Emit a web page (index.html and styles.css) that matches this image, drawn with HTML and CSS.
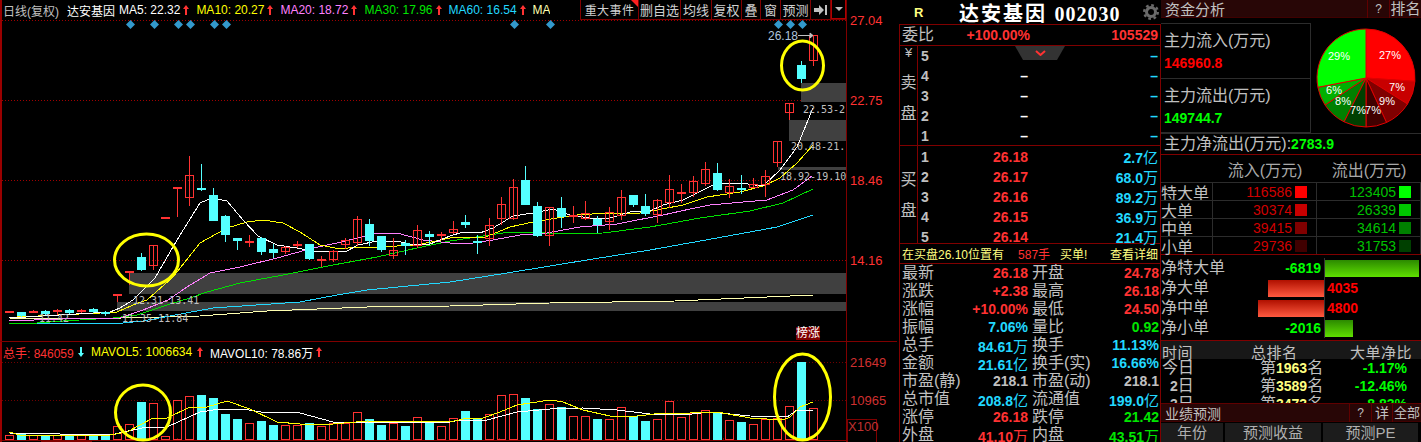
FILE: index.html
```html
<!DOCTYPE html>
<html lang="zh-CN">

<head>
    <meta charset="UTF-8">
    <title>达安基因 002030</title>
    <link rel="stylesheet" href="styles.css">
</head>

<body>
    <div class="app">
        <!-- K线 + 成交量 -->
        <div class="left">
            <div class="pane kline">
                <div class="plot">
                    <div class="head">
                        <div class="legend">
                            <span class="gray name">日线(复权)</span>
                            <span class="white stock">达安基因</span>
                            <span class="white">MA5: 22.32</span><svg class="up"><path d="M3 0 6 4H4v6H2V4H0z" /></svg>
                            <span class="yellow">MA10: 20.27</span><svg class="up"><path d="M3 0 6 4H4v6H2V4H0z" /></svg>
                            <span class="pink">MA20: 18.72</span><svg class="up"><path d="M3 0 6 4H4v6H2V4H0z" /></svg>
                            <span class="green">MA30: 17.96</span><svg class="up"><path d="M3 0 6 4H4v6H2V4H0z" /></svg>
                            <span class="blue">MA60: 16.54</span><svg class="up"><path d="M3 0 6 4H4v6H2V4H0z" /></svg>
                            <span class="pale">MA:</span>
                        </div>
                        <div class="tools">
                            <div class="tool event">重大事件</div>
                            <div class="tool w42">删自选</div>
                            <div class="tool w31">均线</div>
                            <div class="tool w30">复权</div>
                            <div class="tool w19">叠</div>
                            <div class="tool w20">窗</div>
                            <div class="tool w30">预测</div>
                            <div class="tool w20">
                                <svg width="13" height="10"><path d="M0 3H5V0L10 5 5 10V7H0z M11 0h2v10h-2z" fill="#c0c0c0" /></svg>
                            </div>
                            <div class="tool drop"><svg width="8" height="4"><path d="M0 0H8L4 4z" fill="#c0c0c0" /></svg></div>
                        </div>
                    </div>
                    <svg id="klineChart" class="chart" width="846" height="321" viewBox="0 20 846 321"></svg>
                    <div class="tag">榜涨</div>
                </div>
                <div class="axis price-axis">
                    <p>27.04</p>
                    <p>22.75</p>
                    <p>18.46</p>
                    <p>14.16</p>
                </div>
            </div>
            <div class="pane vol">
                <div class="plot">
                    <div class="head vol-head">
                        <span class="red">总手: 846059</span><svg class="up down"><path d="M3 10 6 6H4V0H2V6H0z" /></svg>
                        <span class="yellow">MAVOL5: 1006634</span><svg class="up"><path d="M3 0 6 4H4v6H2V4H0z" /></svg>
                        <span class="white">MAVOL10: 78.86万</span><svg class="up"><path d="M3 0 6 4H4v6H2V4H0z" /></svg>
                    </div>
                    <svg id="volChart" class="chart" width="846" height="80" viewBox="0 362 846 80"></svg>
                </div>
                <div class="axis vol-axis">
                    <p>21649</p>
                    <p>10965</p>
                    <p class="x100">X100</p>
                </div>
            </div>
        </div>

        <!-- 盘口 -->
        <div class="quote">
            <div class="title">
                <span class="r">R</span>
                <span class="stock-name">达安基因 <em>002030</em></span>
                <svg class="gear" width="16" height="16">
                    <circle cx="8" cy="8" r="4.5" fill="none" stroke="#6a6a6a" stroke-width="3" />
                    <circle cx="8" cy="8" r="6.8" fill="none" stroke="#6a6a6a" stroke-width="2.4" stroke-dasharray="2.7 2.64" />
                </svg>
            </div>
            <div class="box">
                <div class="ratio">
                    <span class="lab">委比</span>
                    <b class="red">+100.00%</b>
                    <b class="red right">105529</b>
                </div>
                <div class="book sell">
                    <div class="side"><small>¥</small><span>卖</span><span>盘</span></div>
                    <div class="rows">
                        <div class="row"><b>5</b><i></i><i class="blue">–</i></div>
                        <div class="row"><b>4</b><i class="white">–</i><i class="blue">–</i></div>
                        <div class="row"><b>3</b><i class="white">–</i><i class="blue">–</i></div>
                        <div class="row"><b>2</b><i class="white">–</i><i class="blue">–</i></div>
                        <div class="row"><b>1</b><i class="white">–</i><i class="blue">–</i></div>
                    </div>
                    <div class="fold"><svg width="11" height="6"><path d="M1 1 5.5 5 10 1" fill="none" stroke="#ff3232" stroke-width="2" /></svg></div>
                </div>
                <div class="book buy">
                    <div class="side"><span>买</span><span>盘</span></div>
                    <div class="rows">
                        <div class="row"><b>1</b><b class="red">26.18</b><b class="blue">2.7<u>亿</u></b></div>
                        <div class="row"><b>2</b><b class="red">26.17</b><b class="blue">68.0<u>万</u></b></div>
                        <div class="row"><b>3</b><b class="red">26.16</b><b class="blue">89.2<u>万</u></b></div>
                        <div class="row"><b>4</b><b class="red">26.15</b><b class="blue">36.9<u>万</u></b></div>
                        <div class="row"><b>5</b><b class="red">26.14</b><b class="blue">21.4<u>万</u></b></div>
                    </div>
                </div>
                <div class="notice">
                    <span>在买盘26.10位置有</span>
                    <span class="red hand">587手</span>
                    <span class="bill">买单!</span>
                    <span class="more">查看详细</span>
                </div>
                <div class="stats">
                    <span>最新</span><b class="red">26.18</b><span>开盘</span><b class="red">24.78</b>
                    <span>涨跌</span><b class="red">+2.38</b><span>最高</span><b class="red">26.18</b>
                    <span>涨幅</span><b class="red">+10.00%</b><span>最低</span><b class="red">24.50</b>
                    <span>振幅</span><b class="blue">7.06%</b><span>量比</span><b class="green">0.92</b>
                    <span>总手</span><b class="blue">84.61<u>万</u></b><span>换手</span><b class="blue">11.13%</b>
                    <span>金额</span><b class="blue">21.61<u>亿</u></b><span>换手(实)</span><b class="blue">16.66%</b>
                    <span>市盈(静)</span><b>218.1</b><span>市盈(动)</span><b>218.1</b>
                    <span>总市值</span><b class="blue">208.8<u>亿</u></b><span>流通值</span><b class="blue">199.0<u>亿</u></b>
                    <span>涨停</span><b class="red">26.18</b><span>跌停</span><b class="green">21.42</b>
                    <span>外盘</span><b class="red">41.10<u>万</u></b><span>内盘</span><b class="green">43.51<u>万</u></b>
                </div>
            </div>
        </div>

        <!-- 资金分析 -->
        <div class="funds">
            <div class="bar">
                <span class="bar-title">资金分析</span>
                <span class="bar-btn q">?</span>
                <span class="bar-btn rank">排名</span>
            </div>
            <div class="flow">
                <div class="flow-boxes">
                    <div class="flow-box">
                        <span class="lab">主力流入(万元)</span>
                        <b class="bright-red">146960.8</b>
                    </div>
                    <div class="flow-box">
                        <span class="lab">主力流出(万元)</span>
                        <b class="bright-green">149744.7</b>
                    </div>
                </div>
                <svg class="pie" width="110" height="110" viewBox="0 0 110 110">
                    <path d="M55 55V6A49 49 0 0 1 103.9 58.3z" fill="#ff0000" />
                    <path d="M55 55 103.9 58.3A49 49 0 0 1 96.5 81z" fill="#c80000" />
                    <path d="M55 55 96.5 81A49 49 0 0 1 75.5 99.5z" fill="#800000" />
                    <path d="M55 55 75.5 99.5A49 49 0 0 1 55 104z" fill="#400000" />
                    <path d="M55 55V104A49 49 0 0 1 33 98.8z" fill="#004000" />
                    <path d="M55 55 33 98.8A49 49 0 0 1 14 82z" fill="#008000" />
                    <path d="M55 55 14 82A49 49 0 0 1 6.9 64.3z" fill="#00b000" />
                    <path d="M55 55 6.9 64.3A49 49 0 0 1 55 6z" fill="#00ff00" />
                    <text x="79" y="36">27%</text>
                    <text x="86" y="68">7%</text>
                    <text x="76" y="82">9%</text>
                    <text x="62" y="91">7%</text>
                    <text x="47" y="91">7%</text>
                    <text x="32" y="82">8%</text>
                    <text x="23" y="71">6%</text>
                    <text x="28" y="37">29%</text>
                </svg>
            </div>
            <div class="net-line"><span class="lab">主力净流出(万元):</span><b class="bright-green">2783.9</b></div>
            <div class="table">
                <div class="cell head-cell"></div>
                <div class="cell head-cell">流入(万元)</div>
                <div class="cell head-cell">流出(万元)</div>
                <div class="cell lab-cell">特大单</div>
                <div class="cell num t-red">116586<i class="sw s1"></i></div>
                <div class="cell num t-green">123405<i class="sw g1"></i></div>
                <div class="cell lab-cell">大单</div>
                <div class="cell num t-red">30374<i class="sw s2"></i></div>
                <div class="cell num t-green">26339<i class="sw g2"></i></div>
                <div class="cell lab-cell">中单</div>
                <div class="cell num t-red">39415<i class="sw s3"></i></div>
                <div class="cell num t-green">34614<i class="sw g3"></i></div>
                <div class="cell lab-cell">小单</div>
                <div class="cell num t-red">29736<i class="sw s4"></i></div>
                <div class="cell num t-green">31753<i class="sw g4"></i></div>
            </div>
            <div class="net">
                <div class="net-row">
                    <div class="net-left"><span class="lab">净特大单</span><b class="bright-green auto">-6819</b></div>
                    <div class="net-right"><i class="fill f-green" style="width:94px"></i></div>
                </div>
                <div class="net-row">
                    <div class="net-left"><span class="lab">净大单</span><i class="fill f-red auto" style="width:56px"></i></div>
                    <div class="net-right"><b class="bright-red">4035</b></div>
                </div>
                <div class="net-row">
                    <div class="net-left"><span class="lab">净中单</span><i class="fill f-red auto" style="width:66px"></i></div>
                    <div class="net-right"><b class="bright-red">4800</b></div>
                </div>
                <div class="net-row">
                    <div class="net-left"><span class="lab">净小单</span><b class="bright-green auto">-2016</b></div>
                    <div class="net-right"><i class="fill f-green" style="width:28px"></i></div>
                </div>
            </div>
            <div class="ranks">
                <div class="rank-head"><span>时间</span><span>总排名</span><span>大单净比</span></div>
                <div class="rank-row"><span class="when">今日</span><span class="pos">第<b>1963</b>名</span><b class="bright-green pct">-1.17%</b></div>
                <div class="rank-row"><span class="when"><b>2</b>日</span><span class="pos">第<b>3589</b>名</span><b class="bright-green pct">-12.46%</b></div>
                <div class="rank-row"><span class="when"><b>3</b>日</span><span class="pos">第<b>3473</b>名</span><b class="bright-green pct">-8.83%</b></div>
            </div>
            <div class="bar forecast">
                <span class="bar-title">业绩预测</span>
                <span class="bar-btn q">?</span>
                <span class="bar-btn more-btn">详</span>
                <span class="bar-btn all">全部</span>
            </div>
            <div class="forecast-head">
                <span class="c1">年份</span>
                <span class="c2">预测收益</span>
                <span class="c3">预测PE</span>
            </div>
        </div>
    </div>
    <script src="chart.js"></script>
</body>

</html>
```

FILE: styles.css
```css
html,
body {
    margin: 0;
    height: 100%;
    overflow: hidden;
    background-color: #000;
}

body {
    font-family: "Liberation Sans", "Noto Sans CJK SC", sans-serif;
    font-size: 12px;
    color: #c0c0c0;
}

p {
    margin: 0;
}

i,
em,
u {
    font-style: normal;
    text-decoration: none;
}

.app {
    display: grid;
    grid-template-columns: 897px 264px 260px;
    height: 442px;
    overflow: hidden;
}

.white { color: #fff; }
.gray { color: #c0c0c0; }
.yellow { color: #ffff00; }
.pink { color: #ff80ff; }
.green { color: #00e600; }
.blue { color: #22d8ff; }
.pale { color: #ffffb0; }
.red { color: #ff3232; }
.bright-red { color: #ff0000; }
.bright-green { color: #00ff00; }

/* left chart */
.left {
    box-shadow: inset 2px 0 #9a0000;
}

.pane {
    display: flex;
}

.kline {
    height: 341px;
    border-bottom: 1px solid #800000;
}

.vol {
    height: 100px;
}

.plot {
    width: 846px;
    position: relative;
}

.chart {
    display: block;
    overflow: visible;
}

.head {
    height: 20px;
    display: flex;
    align-items: center;
    white-space: nowrap;
}

.legend {
    width: 550px;
    height: 20px;
    padding-left: 3px;
    box-sizing: border-box;
    display: flex;
    align-items: center;
    overflow: hidden;
    flex-shrink: 0;
}

.legend .name {
    width: 64px;
    flex-shrink: 0;
}

.legend .stock {
    width: 52px;
    flex-shrink: 0;
}

.up {
    width: 6px;
    height: 10px;
    margin: 0 7px 0 3px;
    fill: #ff3232;
    flex-shrink: 0;
}

.down {
    fill: #54ffff;
}

.tools {
    margin-left: auto;
    display: flex;
    height: 20px;
    box-sizing: border-box;
    border: 1px solid #800000;
    border-top: 0;
    border-right: 0;
    color: #d0d0d0;
}

.tool {
    display: flex;
    align-items: center;
    justify-content: center;
    border-right: 1px solid #800000;
    box-sizing: border-box;
    font-size: 13px;
}

.event {
    width: 58px;
    font-size: 12px;
    letter-spacing: 0.4px;
    position: relative;
}

.event::after {
    content: "";
    position: absolute;
    top: 0;
    right: 0;
    border-top: 7px solid #ff2020;
    border-left: 7px solid transparent;
}

.w42 { width: 42px; }
.w31 { width: 31px; }
.w30 { width: 30px; }
.w20 { width: 20px; }
.w19 { width: 19px; }

.drop {
    width: 15px;
    border: 1px solid #b00000;
    border-top: 0;
}

.tag {
    position: absolute;
    left: 796px;
    top: 327px;
    width: 24px;
    height: 13px;
    line-height: 13px;
    text-align: center;
    background-color: #800000;
    color: #fff;
    font-size: 12px;
}

.axis {
    width: 51px;
    border-left: 1px solid #800000;
    box-sizing: border-box;
    color: #ff3232;
    font-size: 13px;
    padding-left: 3px;
}

.price-axis {
    padding-top: 13px;
}

.price-axis p {
    height: 80px;
    line-height: 15px;
}

.vol-axis {
    padding-top: 14px;
    color: #d03030;
    position: relative;
}

.vol-axis p {
    height: 38px;
    line-height: 14px;
}

.x100 {
    margin-left: -3px;
    width: 30px;
    border: 1px solid #800000;
    box-sizing: border-box;
    text-align: center;
    color: #c03030;
    margin-top: -13px;
}

.vol-head {
    color: #ff3232;
    padding-left: 3px;
}

.vol-head span:nth-of-type(1) {
    width: 72px;
}

.vol-head span:nth-of-type(2) {
    width: 103px;
}

/* chart svg */
.grid-line {
    stroke: #a00000;
    stroke-dasharray: 1 2;
}

.vol-grid {
    stroke: #700000;
}

.band {
    fill: #404040;
}

.ma {
    fill: none;
    stroke-width: 1;
    shape-rendering: crispEdges;
}

.ma5 { stroke: #fff; }
.ma10 { stroke: #ffff00; }
.ma20 { stroke: #ff80ff; }
.ma30 { stroke: #00e000; }
.ma60 { stroke: #22d8ff; }
.ma120 { stroke: #ffffb0; }

.wick-r { stroke: #ff3232; }
.wick-c { stroke: #54ffff; }
.body-r { fill: none; stroke: #ff3232; }
.body-f { fill: #ff3232; }
.body-c { fill: #54ffff; }

.ring {
    fill: none;
    stroke: #ffff00;
    stroke-width: 3;
}

.diamond {
    fill: #3399cc;
}

.price-tip {
    fill: #c0c0c0;
    font-family: "DejaVu Sans Mono", monospace;
    font-size: 10px;
}

.last-tip {
    fill: #b0c4dc;
    font-size: 12px;
}

.base-line {
    stroke: #800000;
}

/* quote */
.quote {
    padding-left: 2px;
    box-sizing: border-box;
}

.title {
    height: 24px;
    display: flex;
    align-items: center;
}

.r {
    color: #ffff80;
    font-weight: bold;
    font-size: 13px;
    width: 60px;
    padding-left: 15px;
    box-sizing: border-box;
}

.stock-name {
    color: #fff;
    font-weight: bold;
    font-size: 20px;
    letter-spacing: 2px;
    white-space: nowrap;
}

.stock-name em {
    font-family: "Liberation Serif", serif;
    letter-spacing: 1px;
}

.gear {
    margin-left: auto;
    margin-right: 2px;
}

.box {
    border: 1px solid #800000;
    border-bottom: 0;
    height: 418px;
    box-sizing: border-box;
}

.lab {
    font-size: 16px;
    line-height: 18px;
    white-space: nowrap;
}

.ratio {
    height: 20px;
    display: grid;
    grid-template-columns: 64px 64px 1fr;
    align-items: center;
    padding: 0 2px;
    border-bottom: 1px solid #800000;
    font-size: 14px;
    white-space: nowrap;
}

.ratio b {
    text-align: right;
}

.book {
    display: flex;
    border-bottom: 1px solid #800000;
    position: relative;
}

.sell {
    height: 99px;
}

.buy {
    height: 97px;
}

.side {
    width: 17px;
    flex-shrink: 0;
    border-right: 1px solid #800000;
    display: flex;
    flex-direction: column;
    align-items: center;
    justify-content: center;
    gap: 14px;
    font-size: 16px;
    line-height: 17px;
}

.sell .side {
    gap: 14px;
    justify-content: flex-start;
}

.side small {
    font-size: 13px;
    line-height: 14px;
}

.rows {
    flex: 1;
}

.row {
    height: 20px;
    display: grid;
    grid-template-columns: 15px 92px 130px;
    align-items: center;
    font-size: 14px;
    font-weight: bold;
    padding-left: 3px;
    box-sizing: border-box;
    white-space: nowrap;
}

.row > :nth-child(2),
.row > :nth-child(3) {
    text-align: right;
}

.row u,
.stats u {
    font-weight: normal;
    font-size: 15px;
}

.fold {
    position: absolute;
    left: 115px;
    top: 0;
    width: 50px;
    height: 14px;
    background-color: #333;
    clip-path: polygon(0 0, 100% 0, 84% 100%, 16% 100%);
    display: flex;
    justify-content: center;
    padding-top: 4px;
    box-sizing: border-box;
}

.notice {
    height: 19px;
    display: flex;
    align-items: center;
    padding: 0 2px;
    color: #ffff80;
    border-bottom: 1px solid #800000;
    white-space: nowrap;
}

.hand {
    margin-left: 14px;
}

.bill {
    margin-left: 10px;
}

.more {
    margin-left: auto;
}

.stats {
    display: grid;
    grid-template-columns: 54px 68px 56px 67px;
    grid-auto-rows: 18px;
    column-gap: 4px;
    align-items: center;
    padding-left: 2px;
    font-size: 14px;
    white-space: nowrap;
}

.stats span {
    font-size: 16px;
    line-height: 18px;
}

.stats b {
    text-align: right;
}

/* funds */
.funds {
    overflow: hidden;
    height: 442px;
}

.bar {
    height: 18px;
    display: flex;
    align-items: center;
    background-color: #280606;
    font-size: 15px;
    border-bottom: 1px solid #400000;
    box-sizing: border-box;
    padding-left: 4px;
}

.bar-title {
    margin-right: auto;
}

.bar-btn {
    height: 18px;
    line-height: 18px;
    text-align: center;
    border-left: 1px solid #600000;
}

.q {
    width: 21px;
    font-size: 12px;
}

.rank {
    width: 31px;
}

.flow {
    display: flex;
    padding-top: 5px;
    height: 115px;
    box-sizing: border-box;
}

.flow-boxes {
    width: 150px;
    height: 110px;
    box-sizing: border-box;
    border: 1px solid #2c2c2c;
    border-left: 0;
    flex-shrink: 0;
}

.flow-box {
    height: 54px;
    padding-left: 3px;
    padding-top: 8px;
    box-sizing: border-box;
    display: flex;
    flex-direction: column;
    gap: 5px;
    font-size: 14px;
}

.flow-box + .flow-box {
    border-top: 1px solid #2c2c2c;
}

.pie {
    flex-shrink: 0;
}

.pie path {
    stroke: #e00000;
    stroke-width: 1;
}

.pie text {
    fill: #fff;
    font-size: 11px;
    text-anchor: middle;
}

.net-line {
    height: 22px;
    box-sizing: border-box;
    padding-left: 3px;
    display: flex;
    align-items: center;
    font-size: 14px;
    border-top: 1px solid #2c2c2c;
    border-bottom: 1px solid #800000;
    white-space: nowrap;
}

.table {
    display: grid;
    grid-template-columns: 52px 104px 104px;
    grid-template-rows: 27px repeat(4, 18px);
}

.cell {
    border-right: 1px solid #2c2c2c;
    border-top: 1px solid #2c2c2c;
    box-sizing: border-box;
    display: flex;
    align-items: center;
    white-space: nowrap;
}

.head-cell {
    border: 0;
    font-size: 16px;
    justify-content: center;
    color: #a8a8a8;
}

.lab-cell {
    font-size: 16px;
}

.num {
    justify-content: flex-end;
    padding-right: 9px;
    font-size: 14px;
}

.t-red { color: #d00000; }
.t-green { color: #00c000; }

.sw {
    width: 12px;
    height: 12px;
    margin-left: 3px;
}

.s1 { background-color: #ff0000; }
.s2 { background-color: #c80000; }
.s3 { background-color: #800000; }
.s4 { background-color: #400000; }
.g1 { background-color: #00ff00; }
.g2 { background-color: #00c800; }
.g3 { background-color: #008000; }
.g4 { background-color: #004000; }

.net {
    border-top: 1px solid #800000;
    border-bottom: 1px solid #800000;
    padding: 3px 0;
    height: 87px;
    box-sizing: border-box;
}

.net-row {
    display: flex;
    height: 20px;
    white-space: nowrap;
}

.net-left {
    width: 163px;
    display: flex;
    align-items: center;
    font-size: 14px;
}

.auto {
    margin-left: auto;
}

.net-left b {
    margin-right: 3px;
}

.net-right {
    flex: 1;
    border-left: 1px solid #333;
    display: flex;
    align-items: center;
    font-size: 14px;
}

.net-right b {
    margin-left: 2px;
}

.fill {
    display: block;
    height: 17px;
}

.f-green {
    background: linear-gradient(#2c8a00, #5fe000);
}

.f-red {
    background: linear-gradient(#b01000, #ff5a40);
}

.ranks {
    height: 62px;
    overflow: hidden;
}

.rank-head {
    height: 18px;
    background-color: #181818;
    display: grid;
    grid-template-columns: 89px 99px 1fr;
    align-items: center;
    padding-left: 1px;
    font-size: 15px;
    white-space: nowrap;
    letter-spacing: 0.5px;
}

.rank-row {
    height: 18px;
    display: grid;
    grid-template-columns: 98px 70px 77px;
    align-items: center;
    padding-left: 1px;
    font-size: 16px;
    line-height: 18px;
    white-space: nowrap;
}

.when b {
    font-size: 14px;
    padding-left: 8px;
}

.pos b {
    color: #ffff80;
    font-size: 14px;
}

.pct {
    font-size: 14px;
    text-align: right;
}

.forecast {
    border-top: 1px solid #600000;
    height: 19px;
    font-size: 14px;
}

.more-btn {
    width: 20px;
}

.all {
    width: 28px;
    font-size: 13px;
}

.forecast-head {
    display: flex;
    gap: 2px;
    margin-top: 1px;
    font-size: 15px;
    color: #b0b0b0;
}

.forecast-head span {
    height: 20px;
    line-height: 20px;
    background-color: #1c1c1c;
    text-align: center;
}

.c1 { width: 62px; }
.c2 { width: 96px; }
.c3 { width: 95px; }
```

FILE: chart.js
```js
// 画K线和成交量, 坐标直接用屏幕像素
const NS = 'http://www.w3.org/2000/svg';

function add(svg, tag, attrs, text) {
    const el = document.createElementNS(NS, tag);
    for (const k in attrs) el.setAttribute(k, attrs[k]);
    if (text) el.textContent = text;
    svg.appendChild(el);
    return el;
}

// x, 最高, 实体上, 实体下, 最低, 类型 (r空心红 f实心红 c青)
const candles = [
    [9, 311, 311, 312, 312, 'f'], [21, 312, 312, 316, 317, 'c'], [33, 310, 311, 313, 313, 'f'],
    [45, 310, 311, 314, 315, 'c'], [57, 309, 310, 311, 315, 'f'], [69, 309, 310, 313, 314, 'c'],
    [81, 309, 310, 312, 313, 'f'], [93, 308, 309, 312, 313, 'c'], [105, 311, 312, 313, 316, 'c'],
    [117, 294, 294, 295, 302, 'f'], [129, 271, 271, 272, 285, 'f'], [141, 253, 257, 270, 271, 'c'],
    [153, 245, 245, 265, 270, 'r'], [165, 217, 217, 218, 218, 'f'], [177, 187, 187, 188, 217, 'f'],
    [189, 156, 175, 197, 206, 'r'], [201, 164, 188, 189, 191, 'c'], [213, 188, 195, 221, 221, 'c'],
    [225, 215, 216, 235, 242, 'c'], [237, 238, 238, 241, 250, 'c'], [249, 235, 241, 243, 247, 'f'],
    [261, 237, 238, 252, 255, 'c'], [273, 244, 249, 253, 258, 'c'], [285, 246, 247, 251, 254, 'r'],
    [297, 241, 244, 245, 248, 'f'], [309, 244, 244, 259, 260, 'c'], [321, 256, 259, 260, 267, 'f'],
    [333, 250, 251, 259, 262, 'r'], [345, 238, 240, 244, 249, 'r'], [357, 216, 219, 242, 246, 'r'],
    [369, 219, 224, 241, 246, 'c'], [381, 236, 236, 250, 252, 'c'], [393, 238, 250, 255, 259, 'r'],
    [405, 240, 243, 246, 255, 'c'], [417, 225, 230, 245, 248, 'r'], [429, 231, 234, 237, 244, 'c'],
    [441, 232, 234, 236, 240, 'f'], [453, 221, 229, 232, 234, 'r'], [465, 215, 222, 225, 228, 'c'],
    [477, 235, 241, 242, 254, 'c'], [489, 218, 225, 238, 246, 'r'], [501, 197, 204, 218, 225, 'r'],
    [513, 179, 187, 218, 220, 'r'], [525, 166, 180, 205, 205, 'c'], [537, 202, 206, 236, 237, 'c'],
    [549, 207, 207, 235, 246, 'r'], [561, 197, 208, 217, 228, 'c'], [573, 206, 215, 216, 223, 'f'],
    [585, 201, 213, 218, 220, 'r'], [597, 216, 219, 225, 233, 'c'], [609, 207, 212, 221, 230, 'r'],
    [621, 190, 197, 215, 220, 'r'], [633, 195, 195, 205, 207, 'c'], [645, 194, 206, 214, 216, 'c'],
    [657, 199, 200, 214, 223, 'r'], [669, 175, 189, 202, 208, 'r'], [681, 184, 192, 194, 203, 'f'],
    [693, 176, 181, 192, 197, 'r'], [705, 162, 169, 183, 186, 'r'], [717, 163, 173, 190, 191, 'c'],
    [729, 179, 186, 192, 198, 'r'], [741, 175, 188, 190, 194, 'c'], [753, 178, 184, 187, 188, 'r'],
    [765, 170, 176, 184, 197, 'r'], [777, 141, 141, 162, 167, 'r'], [789, 103, 103, 112, 120, 'r'],
    [801, 61, 65, 79, 83, 'c'], [813, 35, 35, 60, 66, 'r']
];

const maLines = {
    ma120: '10,319 123,318 200,316 267,311 367,307 450,306 550,303 675,301 813,295',
    ma60: '9,323 123,323 143,321 213,308 300,302 337,295 367,290 450,282 507,273 593,259 650,250 717,238 777,227 813,215',
    ma30: '9,324 37,323 63,321 113,318 137,315 167,305 190,298 207,292 240,283 283,275 333,265 377,257 417,248 450,241 483,236 510,232 533,232 557,234 603,233 650,227 700,218 750,211 783,203 813,189',
    ma20: '9,321 60,319 120,318 143,310 168,300 187,287 210,273 240,267 277,258 313,248 337,243 377,233 397,233 423,240 450,243 473,243 493,240 520,235 547,233 580,227 617,224 663,215 690,209 710,205 743,202 767,200 793,190 812,176',
    ma10: '17,317 100,313 117,312 133,305 147,300 173,277 200,243 227,228 247,222 263,220 283,223 300,232 320,245 340,249 357,247 377,247 417,245 450,238 463,237 483,238 510,227 533,222 557,218 577,215 607,213 640,213 657,210 683,205 707,197 740,192 763,186 780,178 797,163 813,145',
    ma5: '9,318 110,312 120,308 133,300 155,278 177,240 200,203 212,198 227,201 243,220 258,236 277,245 297,248 317,252 347,251 358,245 377,241 397,241 413,245 430,244 450,236 463,232 480,233 493,228 513,216 533,213 553,209 570,215 590,218 610,218 630,212 650,211 663,205 683,200 703,190 717,183 740,183 763,186 780,170 797,147 813,108'
};

const kline = document.getElementById('klineChart');

[20, 100, 180, 260].forEach(y => {
    add(kline, 'line', { x1: 2, x2: 846, y1: y + 0.5, y2: y + 0.5, class: 'grid-line' });
});

// 缺口
[[129, 273, 717, 21], [117, 302, 729, 9], [801, 83, 45, 19], [789, 120, 57, 21], [778, 167, 68, 3]].forEach(b => {
    add(kline, 'rect', { x: b[0], y: b[1], width: b[2], height: b[3], class: 'band' });
});

for (const name in maLines) {
    add(kline, 'polyline', { points: maLines[name], class: 'ma ' + name });
}

candles.forEach(c => {
    const [x, hi, top, bot, lo, type] = c;
    const wick = type === 'c' ? 'wick-c' : 'wick-r';
    add(kline, 'line', { x1: x + 0.5, x2: x + 0.5, y1: hi, y2: lo, class: wick, 'shape-rendering': 'crispEdges' });
    if (type === 'r') {
        add(kline, 'rect', { x: x - 3.5, y: top + 0.5, width: 8, height: bot - top, class: 'body-r', 'shape-rendering': 'crispEdges' });
    } else {
        add(kline, 'rect', { x: x - 4, y: top, width: 9, height: Math.max(bot - top, 2), class: 'body-' + type });
    }
});

[130, 154, 178, 190, 214, 226, 514, 550, 778, 790, 802].forEach(x => {
    add(kline, 'polygon', { points: `${x},24 ${x + 4.5},28.5 ${x},33 ${x - 4.5},28.5`, class: 'diamond', transform: 'translate(0.5,-4)' });
});

[[803, 113, '22.53-2'], [791, 150, '20.48-21.'], [780, 180, '18.92-19.10'], [133, 304, '12.31-13.41'], [122, 322, '11.35-11.84'], [39, 322, '11.42']].forEach(t => {
    add(kline, 'text', { x: t[0], y: t[1], class: 'price-tip' }, t[2]);
});

add(kline, 'text', { x: 768, y: 40, class: 'last-tip' }, '26.18');
add(kline, 'path', { d: 'M798 35.5H810M810 33l3 2.5-3 2.5z', stroke: '#c0c0c0', fill: '#c0c0c0' });

add(kline, 'ellipse', { cx: 146.5, cy: 260, rx: 32, ry: 26, class: 'ring' });
add(kline, 'ellipse', { cx: 802.5, cy: 65.5, rx: 21, ry: 24.5, class: 'ring' });

// 成交量, [x, 柱顶, 类型]
const volumes = [
    [9, 435, 'r'], [21, 434, 'c'], [33, 435, 'r'], [45, 435, 'c'], [57, 435, 'r'], [69, 435, 'c'],
    [81, 435, 'r'], [93, 435, 'c'], [105, 435, 'c'], [117, 426, 'r'], [129, 424, 'r'], [141, 402, 'c'],
    [153, 403, 'r'], [165, 436, 'r'], [177, 400, 'r'], [189, 396, 'r'], [201, 395, 'c'], [213, 398, 'c'],
    [225, 414, 'c'], [237, 419, 'c'], [249, 423, 'r'], [261, 421, 'c'], [273, 425, 'c'], [285, 425, 'r'],
    [297, 425, 'r'], [309, 423, 'c'], [321, 426, 'r'], [333, 423, 'r'], [345, 423, 'r'], [357, 412, 'r'],
    [369, 419, 'c'], [381, 425, 'c'], [393, 423, 'r'], [405, 426, 'c'], [417, 417, 'r'], [429, 423, 'c'],
    [441, 426, 'r'], [453, 418, 'r'], [465, 411, 'c'], [477, 418, 'c'], [489, 414, 'r'], [501, 395, 'r'],
    [513, 394, 'r'], [525, 398, 'c'], [537, 409, 'c'], [549, 404, 'r'], [561, 407, 'c'], [573, 416, 'r'],
    [585, 416, 'r'], [597, 419, 'c'], [609, 419, 'r'], [621, 407, 'r'], [633, 416, 'c'], [645, 421, 'c'],
    [657, 419, 'r'], [669, 401, 'r'], [681, 417, 'r'], [693, 413, 'r'], [705, 410, 'r'], [717, 412, 'c'],
    [729, 420, 'r'], [741, 422, 'c'], [753, 424, 'r'], [765, 419, 'r'], [777, 418, 'r'], [789, 406, 'r'],
    [801, 362, 'c'], [813, 408, 'r']
];

const volMa5 = '9,432 20,435 110,435 127,432 153,418 167,418 190,407 207,407 227,401 250,409 277,422 300,424 333,424 367,421 450,422 463,419 483,418 500,412 517,405 550,400 563,402 583,410 610,416 637,416 663,413 690,413 717,412 750,418 783,420 790,417 800,407 813,402';
const volMa10 = '9,433 110,435 147,427 167,427 200,412 220,409 243,409 267,413 283,412 300,413 333,422 450,422 460,420 487,420 517,412 550,409 583,408 617,410 650,414 683,415 710,412 750,416 787,417 797,410 813,410';

const vol = document.getElementById('volChart');

[362, 400].forEach(y => {
    add(vol, 'line', { x1: 2, x2: 846, y1: y + 0.5, y2: y + 0.5, class: 'grid-line vol-grid' });
});

add(vol, 'line', { x1: 2, x2: 846, y1: 440.5, y2: 440.5, class: 'base-line' });
add(vol, 'rect', { x: 41, y: 440, width: 51, height: 2, fill: '#800000' });
[177, 289, 499, 573, 648, 723].forEach(x => {
    add(vol, 'line', { x1: x + 0.5, x2: x + 0.5, y1: 438, y2: 441, class: 'base-line' });
});

volumes.forEach(v => {
    const [x, top, type] = v;
    if (type === 'r') {
        add(vol, 'rect', { x: x - 3.5, y: top + 0.5, width: 8, height: 439 - top, class: 'body-r', 'shape-rendering': 'crispEdges' });
    } else {
        add(vol, 'rect', { x: x - 4, y: top, width: 9, height: 440 - top, class: 'body-c' });
    }
});

add(vol, 'polyline', { points: volMa10, class: 'ma ma5' });
add(vol, 'polyline', { points: volMa5, class: 'ma ma10' });

add(vol, 'ellipse', { cx: 143, cy: 412.5, rx: 27.5, ry: 27.5, class: 'ring' });
add(vol, 'ellipse', { cx: 802.5, cy: 397, rx: 28, ry: 43, class: 'ring' });
```
